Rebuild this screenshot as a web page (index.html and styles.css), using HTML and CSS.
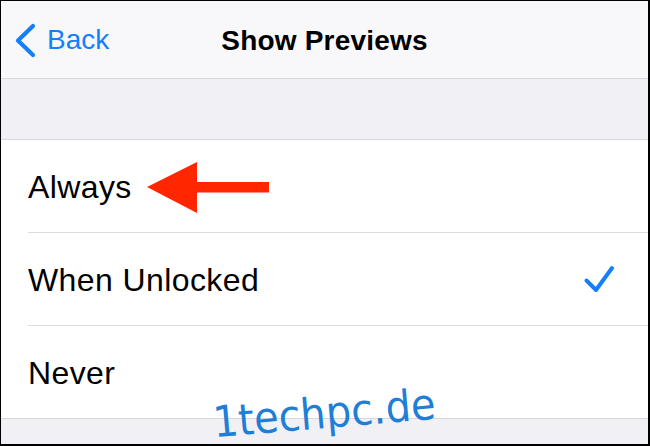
FILE: index.html
```html
<!DOCTYPE html>
<html>

<head>
    <meta charset="utf-8">
    <title>Show Previews</title>
    <link rel="stylesheet" href="styles.css">
</head>

<body>
    <div class="screen">
        <div class="navbar">
            <div class="back">
                <svg class="chevron" width="24" height="36" viewBox="0 0 24 36">
                    <polyline points="18,3 3,17.5 18,32" fill="none" stroke="#157efb" stroke-width="4.2"
                        stroke-linecap="round" stroke-linejoin="round" />
                </svg>
                <span>Back</span>
            </div>
            <div class="title">Show Previews</div>
            <div></div>
        </div>

        <div class="band"></div>

        <div class="list">
            <div class="row">
                <div class="row-inner">
                    <span class="label">Always</span>
                </div>
                <svg class="arrow" width="124" height="53" viewBox="0 0 124 53">
                    <polygon points="1,26 51,1 51,21 123,21 123,31.5 51,31.5 51,52" fill="#ff2600" />
                </svg>
            </div>
            <div class="row">
                <div class="row-inner">
                    <span class="label">When Unlocked</span>
                    <svg class="check" width="32" height="30" viewBox="0 0 32 30">
                        <polyline points="3.5,16.5 13,26 29,4" fill="none" stroke="#147efb" stroke-width="4"
                            stroke-linecap="round" stroke-linejoin="round" />
                    </svg>
                </div>
            </div>
            <div class="row">
                <div class="row-inner">
                    <span class="label">Never</span>
                </div>
            </div>
        </div>

        <div class="footer"></div>

        <div class="watermark">1techpc.de</div>
    </div>
</body>

</html>
```

FILE: styles.css
```css
html,
body {
    margin: 0;
    width: 100%;
    height: 100%;
    font-family: 'Liberation Sans', Arial, sans-serif;
}

.screen {
    position: relative;
    width: 650px;
    height: 446px;
    box-sizing: border-box;
    border: solid #000;
    border-width: 1px 2px 2px 1px;
    background-color: #f1f1f5;
    display: flex;
    flex-direction: column;
    overflow: hidden;
}

.navbar {
    height: 77px;
    background-color: #f8f8fa;
    border-bottom: solid 1px #d8d8dc;
    display: grid;
    grid-template-columns: 1fr auto 1fr;
    align-items: center;
}

.back {
    display: flex;
    align-items: center;
    color: #157efb;
    font-size: 28px;
    padding-left: 14px;
    padding-top: 2px;
}

.back span {
    margin-left: 8px;
    margin-top: -1px;
}

.title {
    font-size: 28px;
    font-weight: bold;
    color: #000;
    padding-top: 3px;
    letter-spacing: 0.2px;
}

.band {
    height: 60px;
}

.list {
    background-color: #fff;
    border-top: solid 1px #d8d8dc;
    border-bottom: solid 1px #d8d8dc;
}

.row {
    position: relative;
    padding-left: 27px;
}

.row-inner {
    height: 92px;
    display: flex;
    align-items: center;
    justify-content: space-between;
    padding-right: 33px;
    border-bottom: solid 1px #dcdcdf;
}

.row:last-child .row-inner {
    border-bottom: none;
}

.label {
    font-size: 32px;
    color: #000;
    padding-top: 2px;
    letter-spacing: 0.4px;
}

.check {
    margin-top: -1px;
}

.arrow {
    position: absolute;
    left: 145px;
    top: 21px;
}

.footer {
    flex: 1;
}

.watermark {
    position: absolute;
    left: 214px;
    top: 400px;
    font-family: 'DejaVu Sans', sans-serif;
    font-size: 40px;
    color: #1f7fd6;
    transform: rotate(-4.8deg) scaleY(1.08);
    transform-origin: left bottom;
    white-space: nowrap;
}
```
